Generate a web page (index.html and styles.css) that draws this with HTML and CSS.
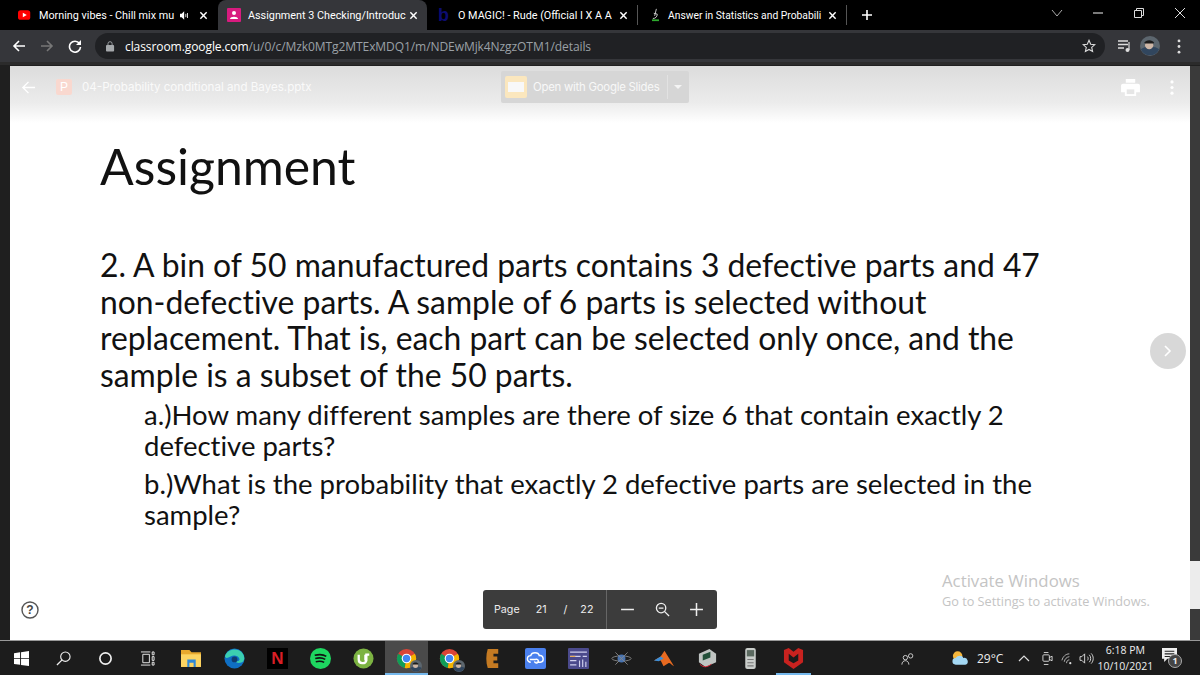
FILE: index.html
```html
<!DOCTYPE html>
<html lang="en">
<head>
<meta charset="utf-8">
<title>Assignment</title>
<link rel="stylesheet" href="styles.css">
</head>
<body>
<svg class="defs" width="0" height="0" aria-hidden="true">
  <symbol id="chrome" viewBox="0 0 24 24">
    <circle cx="12" cy="12" r="11" fill="#db4437"/>
    <path d="M12 12 2.5 6.5A11 11 0 0 0 10 22.800z" fill="#0f9d58"/>
    <path d="M12 12 10 22.800A11 11 0 0 0 23 12 11 11 0 0 0 21.500 6.500z" fill="#f4b400"/>
    <circle cx="12" cy="12" r="5.500" fill="#fff"/><circle cx="12" cy="12" r="4.200" fill="#4285f4"/>
  </symbol>
  <symbol id="close" viewBox="0 0 10 10"><path d="M1.500 1.500l7 7M8.500 1.500l-7 7" stroke="#fff" stroke-width="1.600"/></symbol>
  <symbol id="avatar" viewBox="0 0 24 24">
    <circle cx="12" cy="12" r="12" fill="#5c666e"/><path d="M1 16c4-4 18-4 22 0a12 12 0 0 1-22 0z" fill="#31465e"/>
    <circle cx="11" cy="11" r="5" fill="#cdb6a6"/><path d="M5 8c2-4 10-4 12 0l-1 1H6z" fill="#1c1c1c"/>
  </symbol>
</svg>
<div class="window">
  <header class="tabstrip">
    <div class="tab tab-yt">
      <svg class="fav" viewBox="0 0 16 12"><rect width="14" height="11" y=".5" rx="3" fill="#f00"/><path d="M5.500 3.300v5.400L10 6z" fill="#fff"/></svg>
      <span class="tab-title">Morning vibes - Chill mix mu</span>
      <svg class="speaker" viewBox="0 0 12 10"><path d="M0 3h2l3-3v10L2 7H0z" fill="#fff"/><path d="M7 3v4M9 2v6" stroke="#fff"/></svg>
      <svg class="tab-x"><use href="#close"/></svg>
    </div>
    <div class="tab tab-active">
      <svg class="fav" viewBox="0 0 14 14"><rect width="14" height="14" rx="1" fill="#d81b7f"/><circle cx="7" cy="5" r="2" fill="#fff"/><path d="M3 11c0-3 8-3 8 0z" fill="#fff"/></svg>
      <span class="tab-title">Assignment 3 Checking/Introduc</span>
      <svg class="tab-x"><use href="#close"/></svg>
    </div>
    <div class="tab tab-magic">
      <span class="b-icon">b</span>
      <span class="tab-title">O MAGIC! - Rude (Official I X A A</span>
      <svg class="tab-x"><use href="#close"/></svg>
    </div>
    <div class="tab tab-answer">
      <svg class="fav" viewBox="0 0 10 16"><path d="M6 1 4 9M3 6l4 1M2 12c3 0 5-2 5-5" stroke="#ddd" fill="none"/><path d="M1 14h8" stroke="#2eaa2e" stroke-width="2"/></svg>
      <span class="tab-title">Answer in Statistics and Probabili</span>
      <svg class="tab-x"><use href="#close"/></svg>
    </div>
    <svg class="newtab" viewBox="0 0 12 12"><path d="M6 1v10M1 6h10" stroke="#fff" stroke-width="1.600"/></svg>
    <div class="winctl">
      <svg viewBox="0 0 12 12"><path d="M1 3l5 6 5-6" stroke="#aaa" fill="none"/></svg>
      <svg viewBox="0 0 12 12"><path d="M1 6h10" stroke="#ccc" stroke-width="1.200"/></svg>
      <svg viewBox="0 0 12 12"><path d="M1.500 3.500h7v7h-7zM3.500 3.500v-2h7v7h-2" stroke="#ddd" fill="none"/></svg>
      <svg viewBox="0 0 12 12"><path d="M1 1l10 10M11 1 1 11" stroke="#ddd"/></svg>
    </div>
  </header>
  <nav class="toolbar">
    <svg class="nav-ic" viewBox="0 0 14 14"><path d="M13 7H2M7 2 2 7l5 5" stroke="#fff" stroke-width="1.600" fill="none"/></svg>
    <svg class="nav-ic" viewBox="0 0 14 14"><path d="M1 7h11M7 2l5 5-5 5" stroke="#777" stroke-width="1.600" fill="none"/></svg>
    <svg class="nav-ic" viewBox="0 0 14 14"><path d="M11.500 4.500A5.500 5.500 0 1 0 12.500 8" stroke="#fff" stroke-width="1.600" fill="none"/><path d="M13 1v5H8z" fill="#fff"/></svg>
    <div class="omnibox">
      <svg class="lock" viewBox="0 0 10 12"><rect y="5" width="9" height="7" rx="1" fill="#a5a8ab"/><path d="M2.200 5V3.500a2.300 2.300 0 0 1 4.600 0V5" stroke="#a5a8ab" fill="none"/></svg>
      <span class="url"><span class="url-host">classroom.google.com</span>/u/0/c/Mzk0MTg2MTExMDQ1/m/NDEwMjk4NzgzOTM1/details</span>
      <svg class="star" viewBox="0 0 14 14"><path d="M7 1.300 8.700 5.200l4.200.4-3.200 2.800.9 4.100L7 10.400 3.400 12.500l.9-4.100L1.100 5.600l4.200-.4z" stroke="#ddd" stroke-width="1.100" fill="none"/></svg>
    </div>
    <svg class="queue" viewBox="0 0 14 14"><path d="M0 2h10M0 5.500h10M0 9h6" stroke="#ddd" stroke-width="1.300"/><path d="M11 3v8" stroke="#ddd" stroke-width="1.200"/><circle cx="9.500" cy="11" r="2" fill="#ddd"/></svg>
    <svg class="avatar"><use href="#avatar"/></svg>
    <svg class="kebab" viewBox="0 0 4 16"><circle cx="2" cy="2" r="1.500" fill="#ddd"/><circle cx="2" cy="8" r="1.500" fill="#ddd"/><circle cx="2" cy="14" r="1.500" fill="#ddd"/></svg>
  </nav>
  <div class="stage">
    <main class="viewer">
      <div class="viewer-head">
        <svg class="head-back" viewBox="0 0 16 16"><path d="M15 8H2M8 2 2 8l6 6" stroke="#fff" stroke-width="1.500" fill="none"/></svg>
        <span class="p-icon">P</span>
        <span class="doc-title">04-Probability conditional and Bayes.pptx</span>
        <div class="open-btn">
          <span class="slides-ic"><span class="slides-in"></span></span>
          <span class="open-label">Open with Google Slides</span>
          <span class="open-div"></span>
          <span class="open-caret"></span>
        </div>
        <svg class="print" viewBox="0 0 20 18"><path d="M5 0h10v4H5zM2 5h16a2 2 0 0 1 2 2v7h-4v4H4v-4H0V7a2 2 0 0 1 2-2z" fill="#fff"/><path d="M6 11h8v5H6z" fill="#e6e6e6"/></svg>
        <svg class="head-dots" viewBox="0 0 4 16"><circle cx="2" cy="2" r="1.700" fill="#fff"/><circle cx="2" cy="8" r="1.700" fill="#fff"/><circle cx="2" cy="14" r="1.700" fill="#fff"/></svg>
      </div>
      <article class="slide">
        <h1 class="slide-title">Assignment</h1>
        <p class="q-main">2. A bin of 50 manufactured parts contains 3 defective parts and 47<br>non-defective parts. A sample of 6 parts is selected without<br>replacement. That is, each part can be selected only once, and the<br>sample is a subset of the 50 parts.</p>
        <p class="q-sub">a.)How many different samples are there of size 6 that contain exactly 2<br>defective parts?</p>
        <p class="q-sub">b.)What is the probability that exactly 2 defective parts are selected in the<br>sample?</p>
      </article>
      <div class="next-btn"><svg viewBox="0 0 10 14"><path d="M2 2l5 5-5 5" stroke="#fff" stroke-width="1.600" fill="none"/></svg></div>
      <svg class="help" viewBox="0 0 18 18"><circle cx="9" cy="9" r="8" stroke="#555" stroke-width="1.400" fill="none"/><text x="9" y="13" text-anchor="middle" class="help-q">?</text></svg>
      <div class="pager">
        <div class="pager-left"><span>Page</span><span class="pg-num">21</span><span class="pg-sl">/</span><span class="pg-tot">22</span></div>
        <div class="pager-right">
          <svg viewBox="0 0 14 14"><path d="M1 7h12" stroke="#eee" stroke-width="1.400"/></svg>
          <svg viewBox="0 0 16 16"><circle cx="6.500" cy="6.500" r="5" stroke="#eee" stroke-width="1.400" fill="none"/><path d="M4 6.500h5M10 10l5 5" stroke="#eee" stroke-width="1.400"/></svg>
          <svg viewBox="0 0 14 14"><path d="M1 7h12M7 1v12" stroke="#eee" stroke-width="1.400"/></svg>
        </div>
      </div>
      <div class="activate">
        <div class="act-1">Activate Windows</div>
        <div class="act-2">Go to Settings to activate Windows.</div>
      </div>
    </main>
    <div class="rail"><div class="rail-light"></div></div>
  </div>
  <footer class="taskbar">
    <div class="tb tb-sys"><svg viewBox="0 0 16 16"><path d="M0 2.300 6.500 1.400v6.200H0zM7.500 1.200 16 0v7.600H7.500zM0 8.500h6.500v6.200L0 13.800zM7.500 8.500H16V16l-8.500-1.200z" fill="#fff"/></svg></div>
    <div class="tb tb-sys"><svg viewBox="0 0 16 16"><circle cx="10" cy="6" r="5" stroke="#eee" stroke-width="1.200" fill="none"/><path d="M6.500 9.500 1 15" stroke="#eee" stroke-width="1.400"/></svg></div>
    <div class="tb tb-sys"><svg viewBox="0 0 16 16"><circle cx="8" cy="8" r="6" stroke="#eee" stroke-width="1.800" fill="none"/></svg></div>
    <div class="tb tb-sys"><svg viewBox="0 0 16 16"><path d="M3 3.500h7v9H3zM1 1h10M1 15h10M13 1h2v3h-2zM13 6h2v4h-2zM13 12h2v3h-2z" stroke="#eee" fill="none"/></svg></div>
    <div class="tb tb-first"><svg viewBox="0 0 20 18"><path d="M0 1h8l2 2h9v14H0z" fill="#e8a92e"/><path d="M0 5h19v12H0z" fill="#fcd462"/><path d="M6 10h8v7h-2v-4H8v4H6z" fill="#2e88d8"/></svg></div>
    <div class="tb"><svg viewBox="0 0 22 22"><circle cx="11" cy="11" r="10.500" fill="#0f6fc4"/><path d="M1 9C3 1 14-1 19 5c3 4 3 8 0 10-3 1-6 1-7-1 3 0 5-1 4-3-1-3-6-4-9-2-3 1-4 3-6 0z" fill="#3ccfb0"/><circle cx="11" cy="12" r="3" fill="#0f3d70"/></svg></div>
    <div class="tb"><div class="netflix">N</div></div>
    <div class="tb"><svg viewBox="0 0 20 20"><circle cx="10" cy="10" r="10" fill="#1ed760"/><path d="M4.500 7c4-1 8-1 11 1M5 10c3.500-1 7-.7 9.500.8M5.500 13c3-.7 6-.5 8 .7" stroke="#111" stroke-width="1.500" fill="none"/></svg></div>
    <div class="tb"><svg viewBox="0 0 22 22"><circle cx="11" cy="11" r="10.500" fill="#7cb342"/><path d="M6 7v5c0 5 7 5 8 1V7h3M13 7v6" stroke="#fff" stroke-width="2.400" fill="none"/></svg></div>
    <div class="tb tb-active"><svg><use href="#chrome"/></svg><svg class="tb-badge"><use href="#avatar"/></svg></div>
    <div class="tb"><svg><use href="#chrome"/></svg><svg class="tb-badge"><use href="#avatar"/></svg></div>
    <div class="tb"><svg viewBox="0 0 14 22"><path d="M2 1h11v5H8v3h4v4H8v3h5v5H2c-2-6-2-14 0-20z" fill="#c47a22"/></svg></div>
    <div class="tb"><svg viewBox="0 0 22 22"><rect width="22" height="22" rx="2" fill="#4a80ee"/><path d="M6 15a3.500 3.500 0 0 1 0-7c1-4 8-4 9 0a3.500 3.500 0 0 1 1 7h-4M5 12h6a2 2 0 1 1-1 2" stroke="#fff" stroke-width="1.500" fill="none"/></svg></div>
    <div class="tb"><svg viewBox="0 0 20 20"><rect width="20" height="20" rx="1" fill="#4b4a8c"/><path d="M2 4h16M2 8h10M14 8h4M2 12h6M11 12v6M14 11v7M17 13v5M2 16h6" stroke="#d0d0ee" stroke-width="1.100"/><path d="M2 8h5" stroke="#e8a94c"/></svg></div>
    <div class="tb"><svg viewBox="0 0 24 16"><ellipse cx="12" cy="8" rx="11" ry="3" stroke="#888" fill="none"/><circle cx="12" cy="8" r="4.500" fill="#4a74b0"/><path d="M5 1l14 14M19 1 5 15" stroke="#888"/></svg></div>
    <div class="tb"><svg viewBox="0 0 22 20"><path d="M0 12 7 8l4-6 5 8 5 8c-3-1-4-4-6-3l-5 3-3-6z" fill="#e86a20"/><path d="M0 12l7-4 3 2-5 3z" fill="#3a8ed8"/></svg></div>
    <div class="tb"><svg viewBox="0 0 20 22"><path d="M1 6 12 1l7 5v9L8 20l-7-5z" fill="#bfc4c2"/><path d="M5 7l8-3v6l-8 3z" fill="#23503a"/><path d="M2 17c4 4 8 3 12 0" stroke="#d23" fill="none"/></svg></div>
    <div class="tb"><svg viewBox="0 0 10 20"><rect width="10" height="20" rx="2" fill="#c9cdca"/><rect x="1.500" y="2" width="7" height="6" fill="#5b6a60"/><path d="M2 11h6M2 14h6M2 17h6" stroke="#777"/></svg></div>
    <div class="tb tb-running"><svg viewBox="0 0 20 22"><path d="M0 2 5 0l5 4 5-4 5 2v13l-10 7L0 15z" fill="#c8221f"/><path d="M5 6l5 4 5-4v7l-5 3-5-3z" fill="#1a1a1a"/></svg></div>
    <div class="tray">
      <svg class="tr-people" viewBox="0 0 16 14"><circle cx="11" cy="4" r="2.500" stroke="#ddd" fill="none"/><circle cx="5" cy="6" r="2.500" stroke="#ddd" fill="none"/><path d="M1 14c0-6 8-6 8 0" stroke="#ddd" fill="none"/></svg>
      <svg class="tr-weather" viewBox="0 0 20 16"><circle cx="7" cy="6" r="5" fill="#f6b73c"/><path d="M5 15a3.500 3.500 0 0 1 0-7c2-3 7-3 8 0a3.500 3.500 0 0 1 2 7z" fill="#a4d8f4"/></svg>
      <span class="tr-temp">29°C</span>
      <svg class="tr-caret" viewBox="0 0 12 8"><path d="M1 7l5-5 5 5" stroke="#ddd" stroke-width="1.200" fill="none"/></svg>
      <svg class="tr-meet" viewBox="0 0 12 16"><rect x="1" y="4" width="7" height="7" rx="1" stroke="#ddd" fill="none"/><path d="M8 7l3-1.500v5L8 9M2 1.500h5M2 14.500h5" stroke="#ddd" fill="none"/></svg>
      <svg class="tr-wifi" viewBox="0 0 14 14"><path d="M1 9c1-4 4-7 8-7M3.500 10.500c.5-3 2.500-5 5.500-5.500M6 12c0-2 1-3.500 3-3.500" stroke="#bbb" fill="none"/><circle cx="10" cy="12" r="1.200" fill="#ddd"/></svg>
      <svg class="tr-vol" viewBox="0 0 16 14"><path d="M1 5h2l3-3v10L3 9H1z" stroke="#ddd" fill="none"/><path d="M9 5c1 1 1 3 0 4M11 3c2 2 2 6 0 8M13 1.500c3 3 3 8 0 11" stroke="#ddd" fill="none"/></svg>
      <div class="clock"><span>6:18 PM</span><span>10/10/2021</span></div>
      <div class="notif">
        <svg viewBox="0 0 14 14"><path d="M0 0h14v10H5l-3 3v-3H0z" fill="#eee"/><path d="M2.500 3h9M2.500 5.500h9M2.500 8h6" stroke="#222"/></svg>
        <span class="notif-badge">1</span>
      </div>
    </div>
  </footer>
</div>
</body>
</html>
```
FILE: styles.css
```css
* { box-sizing: border-box; }
html, body { margin: 0; height: 100%; overflow: hidden; }
body { background: #000; font-family: "Roboto", "Open Sans", sans-serif; }
.defs { position: absolute; }
.window { width: 1200px; height: 675px; display: flex; flex-direction: column; }

/* tab strip */
.tabstrip { height: 30px; background: #000; display: flex; align-items: center; padding-left: 18px; color: #fff; font-size: 10.800px; }
.tab { height: 30px; display: flex; align-items: center; flex: none; position: relative; }
.fav { width: 14px; height: 14px; flex: none; }
.tab-title { white-space: nowrap; flex: none; }
.tab-x { width: 9px; height: 9px; flex: none; }
.tab-yt { width: 200px; }
.tab-yt .tab-title { margin-left: 7px; width: 133px; }
.speaker { width: 10px; height: 9px; margin-left: 8px; margin-right: 9px; }
.tab-active { width: 209px; background: #35363a; border-radius: 8px 8px 0 0; padding-left: 9px; }
.tab-active .tab-title { margin-left: 7px; width: 152px; }
.tab-active .tab-x { margin-left: 9px; }
.tab-magic { width: 210px; padding-left: 11px; }
.b-icon { color: #0c0c70; font: 700 18px "Liberation Sans", sans-serif; width: 20px; }
.tab-magic .tab-title { width: 157px; }
.tab-magic .tab-x { margin-left: 4px; }
.tab-answer { width: 210px; border-left: 1px solid #555; border-right: 1px solid #555; height: 20px; padding-left: 13px; }
.tab-answer .fav { width: 9px; height: 14px; }
.tab-answer .tab-title { margin-left: 8px; width: 155px; font-size: 10.300px; }
.tab-answer .tab-x { margin-left: 5px; }
.newtab { width: 12px; height: 12px; margin-left: 14px; }
.winctl { margin-left: auto; display: flex; gap: 29px; padding-right: 14px; align-items: center; height: 30px; padding-bottom: 4px; }
.winctl svg { width: 12px; height: 12px; }

/* toolbar */
.toolbar { height: 35px; background: #35363a; border-bottom: 3px solid #2b2b2b; display: flex; align-items: center; padding-left: 12px; }
.nav-ic { width: 14px; height: 14px; flex: none; margin-right: 14px; }
.nav-ic:nth-child(3) { margin-right: 13px; }
.omnibox { width: 1010px; height: 26px; background: #202124; border-radius: 13px; display: flex; align-items: center; padding-left: 11px; color: #9aa0a6; flex: none; }
.lock { width: 9px; height: 12px; flex: none; }
.url { margin-left: 10px; font: 12.050px "Open Sans", sans-serif; white-space: nowrap; letter-spacing: -.1px; }
.url-host { color: #fff; }
.star { width: 14px; height: 14px; margin-left: auto; margin-right: 9px; }
.queue { width: 14px; height: 14px; margin-left: 13px; flex: none; }
.avatar { width: 20px; height: 20px; margin-left: 8px; flex: none; }
.kebab { width: 4px; height: 15px; margin-left: 17px; flex: none; }

/* viewer */
.stage { flex: 1; display: flex; background: #1f1f1f; padding-left: 10px; min-height: 0; padding-top: 1px; }
.viewer { width: 1180px; background: #fff; position: relative; overflow: hidden; }
.viewer-head { height: 57px; background: linear-gradient(#dcdcdc, #ececec 65%, #fff); display: flex; align-items: center; color: #fff; padding-bottom: 15px; }
.head-back { width: 15px; height: 15px; margin-left: 11px; flex: none; }
.p-icon { width: 16px; height: 16px; background: #f9d8cf; color: #fff; border-radius: 2px; margin-left: 20px; text-align: center; font: 12px/16px "Liberation Sans", sans-serif; }
.doc-title { margin-left: 10px; width: 419px; font: 11.600px "Inter", sans-serif; color: #fafafa; white-space: nowrap; }
.open-btn { width: 188px; height: 32px; background: #d6d6d6; border-radius: 2px; display: flex; align-items: center; padding-left: 4px; font: 11.400px "Inter", sans-serif; color: #f8f8f8; letter-spacing: -.25px; flex: none; }
.slides-ic { width: 22px; height: 22px; background: #fbe7be; border-radius: 2px; display: flex; align-items: center; justify-content: center; }
.slides-in { width: 16px; height: 10px; background: #f8f8f8; }
.open-label { margin-left: 6px; width: 127px; white-space: nowrap; }
.open-div { width: 1px; height: 24px; background: #e2e2e2; margin-left: 7px; }
.open-caret { margin-left: 6px; border: 4px solid transparent; border-top: 4px solid #f4f4f4; margin-top: 4px; }
.print { width: 19px; height: 17px; margin-left: 432px; flex: none; }
.head-dots { width: 4px; height: 15px; margin-left: 30px; flex: none; }

.slide { color: #111; font-family: "Lato", "Open Sans", sans-serif; padding-left: 90px; font-variant-ligatures: none; }
.slide-title { margin: 14px 0 0; font-size: 49.900px; line-height: 58px; font-weight: 400; }
.q-main { margin: 52px 0 0; font-size: 31.850px; line-height: 36.700px; white-space: nowrap; }
.q-sub { margin: 0 0 0 44px; font-size: 27.500px; line-height: 31px; white-space: nowrap; }
.q-main + .q-sub { margin-top: 5.500px; }
.q-sub + .q-sub { margin-top: 7px; }

.next-btn { position: absolute; left: 1140px; top: 267px; width: 36px; height: 36px; border-radius: 50%; background: #d8d8d8; display: flex; align-items: center; justify-content: center; }
.next-btn svg { width: 10px; height: 14px; }
.help { position: absolute; left: 11px; top: 535px; width: 18px; height: 18px; }
.help-q { font: 700 12px "Liberation Sans", sans-serif; fill: #444; }
.pager { position: absolute; left: 473px; top: 524px; width: 234px; height: 39px; background: #3c3c3c; border-radius: 3px; display: flex; color: #eee; font: 10.700px "Inter", sans-serif; }
.pager-left { width: 124px; display: flex; align-items: center; padding-left: 11px; border-right: 1px solid #666; }
.pg-num { margin-left: 16px; }
.pg-sl { margin-left: 17px; }
.pg-tot { margin-left: 13px; }
.pager-right { flex: 1; display: flex; align-items: center; justify-content: space-between; padding: 0 13px; }
.pager-right svg { width: 15px; height: 15px; }
.activate { position: absolute; left: 932px; top: 504px; color: #c4c4c4; font-family: "Open Sans", sans-serif; white-space: nowrap; }
.act-1 { font-size: 16.800px; line-height: 22px; }
.act-2 { font-size: 12.700px; line-height: 19px; }
.rail { width: 10px; background: #3a3a3a; position: relative; }
.rail-light { position: absolute; left: 0; right: 0; top: 495px; height: 48px; background: #ececec; }

/* taskbar */
.taskbar { height: 35px; background: #1c1c1c; border-top: 1px solid #999; display: flex; align-items: center; flex: none; }
.tb { width: 43px; height: 34px; display: flex; align-items: center; justify-content: center; position: relative; flex: none; }
.tb svg { width: 21px; height: 21px; }
.tb-sys { width: 42px; }
.tb-sys svg { width: 15px; height: 15px; }
.tb-first { margin-left: 2px; }
.tb-active { background: #4a4a4a; box-shadow: inset 0 -2px #76b9ed; }
.tb-running::after { content: ""; position: absolute; left: 4px; right: 4px; bottom: 0; height: 2px; background: #76b9ed; }
.tb .tb-badge { position: absolute; right: 6px; bottom: 3px; width: 12px; height: 12px; }
.netflix { width: 21px; height: 21px; background: #000; color: #d81f26; font: 700 17px/21px "Liberation Sans Narrow", "Liberation Sans", sans-serif; text-align: center; }
.tray { flex: 1; display: flex; align-items: center; color: #eee; font: 12px "Open Sans", sans-serif; padding-left: 86px; }
.tr-people { width: 14px; height: 13px; }
.tr-weather { width: 19px; height: 16px; margin-left: 36px; }
.tr-temp { margin-left: 7px; }
.tr-caret { width: 12px; height: 8px; margin-left: 15px; }
.tr-meet { width: 11px; height: 15px; margin-left: 12px; }
.tr-wifi { width: 13px; height: 13px; margin-left: 8px; }
.tr-vol { width: 15px; height: 13px; margin-left: 5px; }
.clock { display: flex; flex-direction: column; align-items: center; margin-left: 3px; font-size: 10.500px; line-height: 16px; padding-bottom: 1px; }
.notif { position: relative; margin-left: 9px; width: 20px; height: 20px; }
.notif svg { width: 15px; height: 15px; }
.notif-badge { position: absolute; left: 6px; top: 6px; width: 14px; height: 14px; border-radius: 50%; background: #444; border: 1px solid #aaa; font: 700 9px/12px "Open Sans", sans-serif; text-align: center; color: #eee; }
```
